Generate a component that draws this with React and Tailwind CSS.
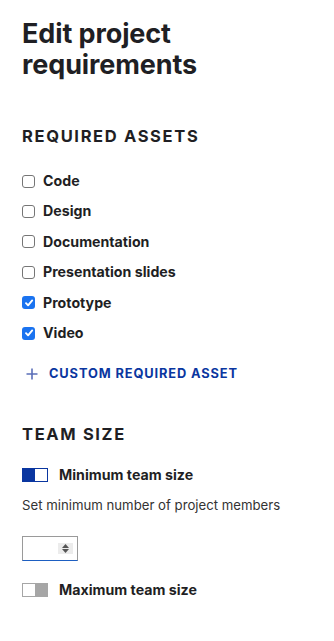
import React from "react";

const items = [
  { label: "Code", checked: false },
  { label: "Design", checked: false },
  { label: "Documentation", checked: false },
  { label: "Presentation slides", checked: false },
  { label: "Prototype", checked: true },
  { label: "Video", checked: true },
];

function Box({ checked }) {
  if (checked) {
    return (
      <span className="flex h-[13px] w-[13px] shrink-0 items-center justify-center rounded-[3px] bg-[#1a73f0]">
        <svg width="10" height="10" viewBox="0 0 10 10">
          <path d="M2 5.2 L4.1 7.3 L8.2 2.4" fill="none" stroke="#fff" strokeWidth="1.9" strokeLinecap="round" strokeLinejoin="round" />
        </svg>
      </span>
    );
  }
  return <span className="h-[13px] w-[13px] shrink-0 rounded-[3px] border border-[#767676] bg-white" />;
}

export default function App() {
  return (
    <div className="min-h-[641px] w-[334px] bg-white pl-[22px] pr-4 text-[#1f1f24]" style={{ fontFamily: "Inter, 'Liberation Sans', sans-serif" }}>
      <h1 className="pt-[18px] text-[27px] font-bold leading-[31px] tracking-[-0.1px]">
        Edit project
        <br />
        requirements
      </h1>

      <h2 className="mt-[46px] text-[16.5px] font-bold uppercase leading-[20px] tracking-[0.1em]">Required assets</h2>

      <div className="mt-[20px] flex flex-col">
        {items.map((it) => (
          <label key={it.label} className="flex h-[30.4px] items-center gap-[8px]">
            <Box checked={it.checked} />
            <span className="text-[14.2px] font-bold leading-none">{it.label}</span>
          </label>
        ))}
      </div>

      <button className="mt-[16px] flex items-center gap-[11px] pl-[4px] text-[#0a36a0]">
        <svg width="12" height="12" viewBox="0 0 12 12">
          <path d="M6 0.5 V11.5 M0.5 6 H11.5" stroke="#5b6fb8" strokeWidth="1.6" />
        </svg>
        <span className="text-[12.8px] font-bold uppercase leading-[20px] tracking-[0.07em]">Custom required asset</span>
      </button>

      <h2 className="mt-[40px] text-[16.5px] font-bold uppercase leading-[20px] tracking-[0.1em]">Team size</h2>

      <div className="mt-[24px] flex items-center gap-[11px]">
        <span className="flex h-[14px] w-[26px] shrink-0 border border-[#0a36a0]">
          <span className="h-full w-1/2 bg-[#0a36a0]" />
          <span className="h-full w-1/2 bg-white" />
        </span>
        <span className="text-[14.2px] font-bold leading-none">Minimum team size</span>
      </div>

      <p className="mt-[13px] text-[13.2px] leading-[18px] text-[#333]">Set minimum number of project members</p>

      <div className="mt-[22px] flex h-[25px] w-[56px] items-center justify-end border border-[#9a9a9a] border-b-[#1d5fc2] pr-[4px]">
        <span className="flex h-[11px] w-[15px] flex-col items-center justify-center gap-[1px] bg-[#ececec]">
          <svg width="7" height="4" viewBox="0 0 7 4"><path d="M0 4 L3.5 0 L7 4Z" fill="#555" /></svg>
          <svg width="7" height="4" viewBox="0 0 7 4"><path d="M0 0 L3.5 4 L7 0Z" fill="#555" /></svg>
        </span>
      </div>

      <div className="mt-[22px] flex items-center gap-[11px]">
        <span className="flex h-[14px] w-[26px] shrink-0 border border-[#a6a6a6]">
          <span className="h-full w-1/2 bg-white" />
          <span className="h-full w-1/2 bg-[#a6a6a6]" />
        </span>
        <span className="text-[14.2px] font-bold leading-none">Maximum team size</span>
      </div>
    </div>
  );
}
